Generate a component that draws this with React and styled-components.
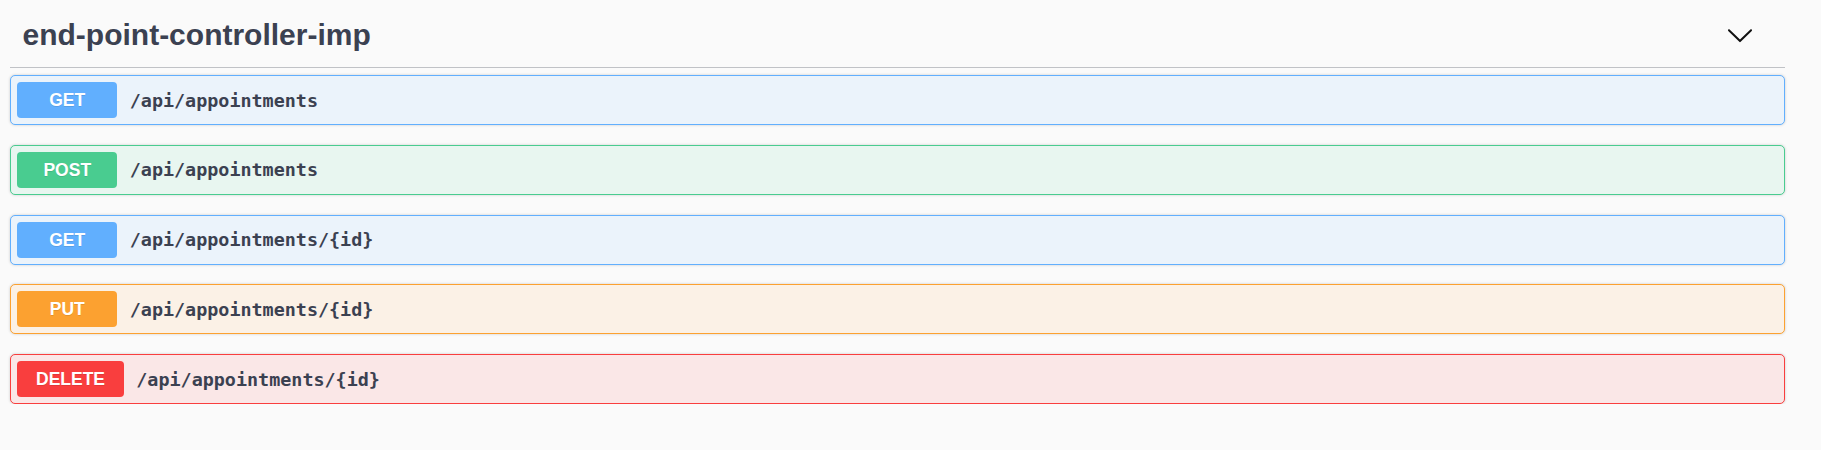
import styled, { createGlobalStyle } from "styled-components"

const GlobalStyle = createGlobalStyle`
  html, body {
    margin: 0;
    padding: 0;
    background: #fafafa;
  }
  body {
    font-family: "Liberation Sans", Arial, sans-serif;
    color: #3b4151;
  }
`

const methods = {
    GET: { color: "#61affe", bg: "#ebf3fb" },
    POST: { color: "#49cc90", bg: "#e8f6f0" },
    PUT: { color: "#fca130", bg: "#fbf1e6" },
    DELETE: { color: "#f93e3e", bg: "#fae7e7" },
}

const endpoints = [
    { method: "GET", path: "/api/appointments" },
    { method: "POST", path: "/api/appointments" },
    { method: "GET", path: "/api/appointments/{id}" },
    { method: "PUT", path: "/api/appointments/{id}" },
    { method: "DELETE", path: "/api/appointments/{id}" },
]

function Chevron() {
    return (
        <svg width="28" height="28" viewBox="0 0 20 20" aria-hidden="true">
            <path
                fill="#111"
                d="M17.418 6.109c.272-.268.709-.268.979 0s.271.701 0 .969l-7.908 7.83c-.27.268-.707.268-.979 0l-7.908-7.83c-.27-.268-.27-.701 0-.969.271-.268.709-.268.979 0L10 13.25l7.418-7.141z"
            />
        </svg>
    )
}

function App() {
    return (
        <>
            <GlobalStyle />
            <Wrapper>
                <TagHeader>
                    <Title>end-point-controller-imp</Title>
                    <Toggle type="button" aria-label="collapse">
                        <Chevron />
                    </Toggle>
                </TagHeader>
                <Operations>
                    {endpoints.map((ep, i) => (
                        <Opblock key={i} $method={ep.method}>
                            <Method $method={ep.method}>{ep.method}</Method>
                            <Path>{ep.path}</Path>
                        </Opblock>
                    ))}
                </Operations>
            </Wrapper>
        </>
    )
}

const Wrapper = styled.div`
    padding: 5px 36px 0 10px;
`

const TagHeader = styled.div`
    display: flex;
    align-items: center;
    padding: 13px 0 15px 12.5px;
    border-bottom: 1px solid rgba(59, 65, 81, 0.3);
`

const Title = styled.h3`
    margin: 0;
    font-family: "Liberation Sans", Arial, sans-serif;
    font-size: 30px;
    line-height: 34px;
    font-weight: 700;
    color: #3b4151;
`

const Toggle = styled.button`
    margin-left: auto;
    margin-right: 31px;
    padding: 0;
    border: none;
    background: none;
    display: flex;
    cursor: pointer;
`

const Operations = styled.div`
    display: flex;
    flex-direction: column;
    gap: 19.75px;
    margin-top: 7px;
`

const Opblock = styled.div`
    display: flex;
    align-items: center;
    height: 48px;
    padding: 0 6.25px;
    border: 1px solid ${p => methods[p.$method].color};
    background: ${p => methods[p.$method].bg};
    border-radius: 5px;
    box-shadow: 0 0 3px rgba(0, 0, 0, 0.19);
`

const Method = styled.span`
    min-width: 100px;
    box-sizing: border-box;
    padding: 0 18.75px;
    height: 36px;
    line-height: 36px;
    text-align: center;
    border-radius: 4px;
    background: ${p => methods[p.$method].color};
    color: #fff;
    font-family: "Liberation Sans", Arial, sans-serif;
    font-size: 17.5px;
    font-weight: 700;
    text-shadow: 0 1px 0 rgba(0, 0, 0, 0.1);
`

const Path = styled.span`
    padding: 0 12.5px;
    font-family: "DejaVu Sans Mono", "Liberation Mono", monospace;
    font-size: 18.4px;
    font-weight: 700;
    color: #3b4151;
`

export default App
